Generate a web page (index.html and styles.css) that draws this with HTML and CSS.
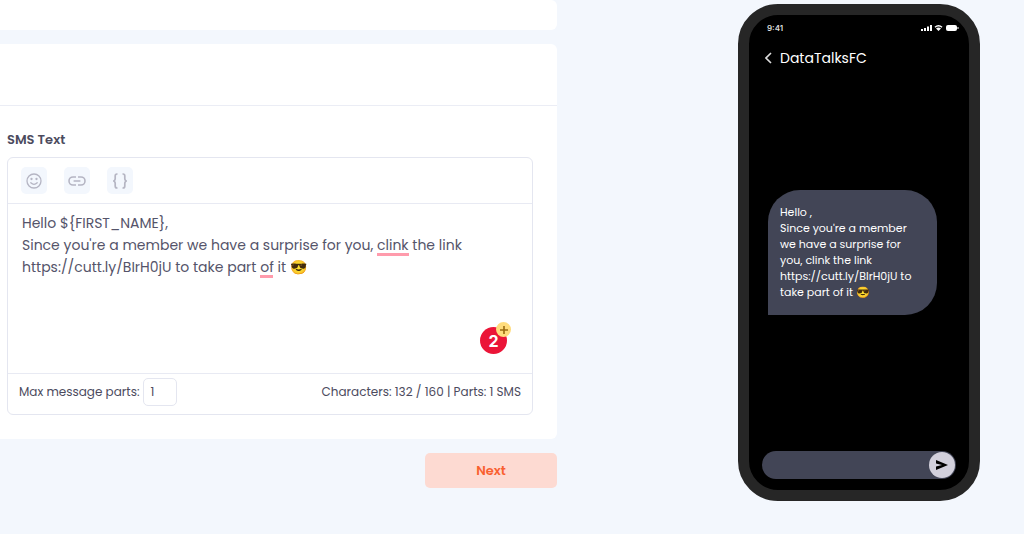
FILE: index.html
```html
<!DOCTYPE html>
<html lang="en">

<head>
    <meta charset="UTF-8">
    <meta name="viewport" content="width=device-width, initial-scale=1.0">
    <title>SMS Text</title>
    <link rel="stylesheet" href="styles.css">
</head>

<body>
    <main class="page">
        <form class="editor-column">
            <section class="card card-previous"></section>

            <section class="card">
                <div class="card-header"></div>
                <div class="card-body">
                    <label class="field-label" for="smsText">SMS Text</label>

                    <div class="editor">
                        <!-- toolbar -->
                        <div class="toolbar">
                            <button type="button" class="tool" aria-label="Insert emoji">
                                <svg width="16" height="16" viewBox="0 0 16 16" fill="none" stroke="currentColor" stroke-width="1.3" stroke-linecap="round">
                                    <circle cx="8" cy="8" r="7" />
                                    <path d="M4.8 9.8Q8 13 11.2 9.8" />
                                    <circle cx="5.5" cy="6" r=".5" fill="currentColor" />
                                    <circle cx="10.5" cy="6" r=".5" fill="currentColor" />
                                </svg>
                            </button>
                            <button type="button" class="tool" aria-label="Insert link">
                                <svg width="18" height="10" viewBox="0 0 18 10" fill="none" stroke="currentColor" stroke-width="1.6">
                                    <path d="M8 1H5a4 4 0 0 0 0 8H8M10 1h3a4 4 0 0 1 0 8H10M5.6 5h6.8" />
                                </svg>
                            </button>
                            <button type="button" class="tool" aria-label="Insert variable">
                                <svg width="16" height="16" viewBox="0 0 16 16" fill="none" stroke="currentColor" stroke-width="1.7">
                                    <path d="M5.5 1H5Q3.2 1 3.2 3V5.5Q3.2 7.8 1.2 8Q3.2 8.2 3.2 10.5V13Q3.2 15 5 15H5.5M10.5 1H11Q12.8 1 12.8 3V5.5Q12.8 7.8 14.8 8Q12.8 8.2 12.8 10.5V13Q12.8 15 11 15H10.5" />
                                </svg>
                            </button>
                        </div>

                        <!-- message text, with the spelling marks laid over it -->
                        <div class="message">
                            <textarea class="message-text" id="smsText" name="sms_text" spellcheck="false">Hello ${FIRST_NAME},
Since you're a member we have a surprise for you, clink the link
https://cutt.ly/BIrH0jU to take part of it 😎</textarea>
                            <span class="mark mark-clink"></span>
                            <span class="mark mark-of"></span>
                            <button type="button" class="issues" aria-label="2 writing issues">2<span class="issues-plus"><svg width="10" height="10" viewBox="0 0 10 10" stroke="#9a6a10" stroke-width="1.6"><path d="M5 1v8M1 5h8" /></svg></span></button>
                        </div>

                        <!-- limits -->
                        <div class="editor-footer">
                            <label for="maxParts">Max message parts:</label>
                            <input class="parts" type="text" id="maxParts" name="max_parts" value="1">
                            <span class="counter">Characters: 132 / 160 | Parts: 1 SMS</span>
                        </div>
                    </div>
                </div>
            </section>

            <button type="submit" class="next">Next</button>
        </form>

        <!-- phone preview -->
        <aside class="preview">
            <div class="phone">
                <div class="status-bar">
                    <span>9:41</span>
                    <svg width="38" height="8" viewBox="0 0 38 8" fill="#fff">
                        <path d="M0 5h2v2H0zM3 4h2v3H3zM6 2.5h2V7H6zM9 1h2v6H9z" />
                        <path d="M13.5 2.8Q17.5-.6 21.5 2.8L20.6 3.8Q17.5 1.2 14.4 3.8ZM15 4.4Q17.5 2.5 20 4.4L17.5 7Z" />
                        <rect x="25" y="1" width="11" height="6" rx="2" />
                        <rect x="36.5" y="3" width="1" height="2" />
                    </svg>
                </div>
                <div class="phone-title">
                    <svg width="7" height="12" viewBox="0 0 7 12" fill="none" stroke="#ddd" stroke-width="1.6"><path d="M6 1L1 6l5 5" /></svg>
                    <span>DataTalksFC</span>
                </div>
                <div class="chat">
                    <p class="bubble">Hello ,<br>Since you're a member we have a surprise for you, clink the link https://cutt.ly/BIrH0jU to take part of it 😎</p>
                </div>
                <div class="reply">
                    <span class="send">
                        <svg width="12" height="10" viewBox="0 0 12 10"><path d="M0 0L12 5L0 10V6.5L6 5L0 3.5Z" fill="#000" /></svg>
                    </span>
                </div>
            </div>
        </aside>
    </main>
</body>

</html>
```
FILE: styles.css
```css
* {
    box-sizing: border-box;
}

body {
    margin: 0;
    background-color: #f3f7fd;
    color: #4c4b5e;
    font-family: Poppins, Inter, sans-serif;
    font-size: 12px;
}

button,
input,
textarea {
    font-family: inherit;
    color: inherit;
}

.page {
    display: grid;
    grid-template-columns: 557fr 467fr;
    min-height: 100vh;
}

.editor-column {
    display: flex;
    flex-direction: column;
    gap: 14px;
}

.card {
    background-color: #ffffff;
    border-radius: 0 6px 6px 0;
}

.card-previous {
    height: 30px;
}

.card-header {
    height: 62px;
    border-bottom: 1px solid #ebedf5;
}

.card-body {
    padding: 24px 24px 24px 7px;
}

.field-label {
    display: block;
    margin-bottom: 7px;
    font-size: 13px;
    font-weight: 600;
    line-height: 20px;
}

.editor {
    border: 1px solid #e4e6f0;
    border-radius: 6px;
}

.toolbar {
    display: flex;
    gap: 17px;
    padding: 9px 13px;
    border-bottom: 1px solid #e8eaf3;
}

.tool {
    display: flex;
    align-items: center;
    justify-content: center;
    width: 26px;
    height: 27px;
    padding: 0;
    border: none;
    border-radius: 5px;
    background-color: #f3f7fd;
    color: #b5b5c3;
}

.message {
    position: relative;
    height: 169px;
}

.message-text {
    display: block;
    width: 100%;
    height: 100%;
    padding: 8px 14px;
    border: none;
    outline: none;
    resize: none;
    background: none;
    color: #55546a;
    font-size: 14px;
    line-height: 22px;
}

.mark {
    position: absolute;
    height: 3px;
    background-color: #ff9bac;
}

.mark-clink {
    top: 49px;
    left: 369px;
    width: 32px;
}

.mark-of {
    top: 71px;
    left: 252px;
    width: 13px;
}

.issues {
    position: absolute;
    right: 25px;
    bottom: 19px;
    width: 27px;
    height: 27px;
    padding: 0;
    border: none;
    border-radius: 50%;
    background-color: #eb1538;
    color: #ffffff;
    font-family: Inter, sans-serif;
    font-size: 16px;
    font-weight: 700;
}

.issues-plus {
    position: absolute;
    top: -5px;
    right: -4px;
    display: flex;
    align-items: center;
    justify-content: center;
    width: 15px;
    height: 15px;
    border-radius: 50%;
    background-color: #ffdc7c;
}

.editor-footer {
    display: flex;
    align-items: center;
    gap: 4px;
    padding: 4px 11px 8px;
    border-top: 1px solid #e8eaf3;
}

.parts {
    width: 34px;
    height: 28px;
    padding: 0 6px;
    border: 1px solid #e4e6f0;
    border-radius: 5px;
    font-size: 12px;
}

.counter {
    margin-left: auto;
}

.next {
    align-self: flex-end;
    width: 132px;
    height: 35px;
    border: none;
    border-radius: 5px;
    background-color: #fddad2;
    color: #f9602f;
    font-size: 13px;
    font-weight: 600;
}

.preview {
    padding: 4px 0 0 181px;
}

.phone {
    display: flex;
    flex-direction: column;
    width: 242px;
    min-height: 497px;
    padding: 8px 10px 11px;
    border: 11px solid #262626;
    border-radius: 40px;
    background-color: #000000;
    color: #ffffff;
}

.status-bar {
    display: flex;
    align-items: center;
    justify-content: space-between;
    padding-left: 8px;
    color: #dddddd;
    font-family: Inter, sans-serif;
    font-size: 8px;
    font-weight: 600;
    line-height: 10px;
}

.phone-title {
    display: flex;
    align-items: center;
    gap: 8px;
    padding: 14px 6px;
    font-size: 14px;
    line-height: 22px;
}

.chat {
    flex: 1;
    padding: 107px 22px 0 9px;
}

.bubble {
    margin: 0;
    padding: 14px 22px 15px 12px;
    border-radius: 32px 32px 32px 0;
    background-color: #424556;
    font-size: 11px;
    line-height: 16px;
}

.reply {
    display: flex;
    justify-content: flex-end;
    margin: 0 3px;
    padding: 1px;
    border-radius: 14px;
    background-color: #424556;
}

.send {
    display: flex;
    align-items: center;
    justify-content: center;
    width: 26px;
    height: 26px;
    border-radius: 50%;
    background-color: #d2d0dc;
}
```
